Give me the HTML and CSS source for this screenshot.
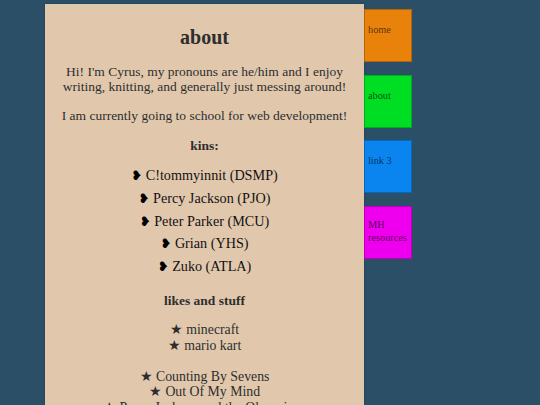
FILE: index.html
```html
<!DOCTYPE html>
<html>
<head>
<meta charset="utf-8">
<link rel="stylesheet" href="styles.css">
</head>
<body>
<div class="layout">
  <main class="card">
    <h1 class="title">about</h1>
    <p class="text">Hi! I'm Cyrus, my pronouns are he/him and I enjoy writing, knitting, and generally just messing around!</p>
    <p class="text">I am currently going to school for web development!</p>
    <h2 class="sub">kins:</h2>
    <ul class="kins">
      <li><span class="heart">❥</span> C!tommyinnit (DSMP)</li>
      <li><span class="heart">❥</span> Percy Jackson (PJO)</li>
      <li><span class="heart">❥</span> Peter Parker (MCU)</li>
      <li><span class="heart">❥</span> Grian (YHS)</li>
      <li><span class="heart">❥</span> Zuko (ATLA)</li>
    </ul>
    <h2 class="sub sub-likes">likes and stuff</h2>
    <p class="stars">★ minecraft<br>★ mario kart</p>
    <p class="stars books">★ Counting By Sevens<br>★ Out Of My Mind<br>★ Percy Jackson and the Olympians<br>★ Heartstopper</p>
  </main>
  <nav class="nav">
    <a class="nav-item home">home</a>
    <a class="nav-item about">about</a>
    <a class="nav-item link3">link 3</a>
    <a class="nav-item mh">MH resources</a>
  </nav>
</div>
</body>
</html>
```

FILE: styles.css
```css
html, body {
  margin: 0;
  padding: 0;
  background: #2a4f66;
  height: 100%;
  overflow: hidden;
}
body {
  font-family: "Liberation Serif", "Times New Roman", serif;
  color: #2e2e2e;
}
.layout {
  display: flex;
  align-items: flex-start;
  padding-left: 45px;
}
.card {
  width: 319px;
  margin-top: 4px;
  min-height: 500px;
  background: #e1c8ad;
  text-align: center;
  padding: 0 6px;
  box-sizing: border-box;
  box-shadow: 0 0 2px rgba(0,0,0,0.3);
}
.title {
  font-size: 20px;
  line-height: 23px;
  margin: 22px 0 0;
  font-weight: bold;
}
.text {
  font-size: 13.5px;
  line-height: 15.5px;
  margin: 14.5px 0 0;
}
.text + .text {
  margin-top: 13px;
}
.sub {
  font-size: 13.5px;
  line-height: 15.5px;
  margin: 14.5px 0 0;
  font-weight: bold;
}
.kins {
  list-style: none;
  padding: 0;
  margin: 11px 0 0;
  color: #111;
  font-size: 14.2px;
  line-height: 22.75px;
}
.kins li {
  height: 22.75px;
}
.heart {
  font-family: "DejaVu Sans", sans-serif;
  font-size: 13px;
  line-height: 0;
  color: #000;
}
.sub-likes {
  margin-top: 15px;
}
.stars {
  font-size: 13.8px;
  line-height: 16px;
  margin: 13.5px 0 0;
}
.books {
  margin-top: 15px;
  line-height: 15.5px;
}
.nav {
  display: flex;
  flex-direction: column;
  gap: 12.7px;
  margin-top: 9px;
}
.nav-item {
  display: block;
  width: 48px;
  height: 53px;
  box-sizing: border-box;
  border: 1px solid rgba(0,0,0,0.22);
  padding: 14px 2px 0 3px;
  font-size: 10.3px;
  line-height: 12.5px;
  color: rgba(0,0,0,0.65);
}
.mh {
  padding-top: 12px;
}
.home { background: #e8820a; }
.about { background: #00de24; }
.link3 { background: #0a84ee; }
.mh { background: #ee00ee; }
```
